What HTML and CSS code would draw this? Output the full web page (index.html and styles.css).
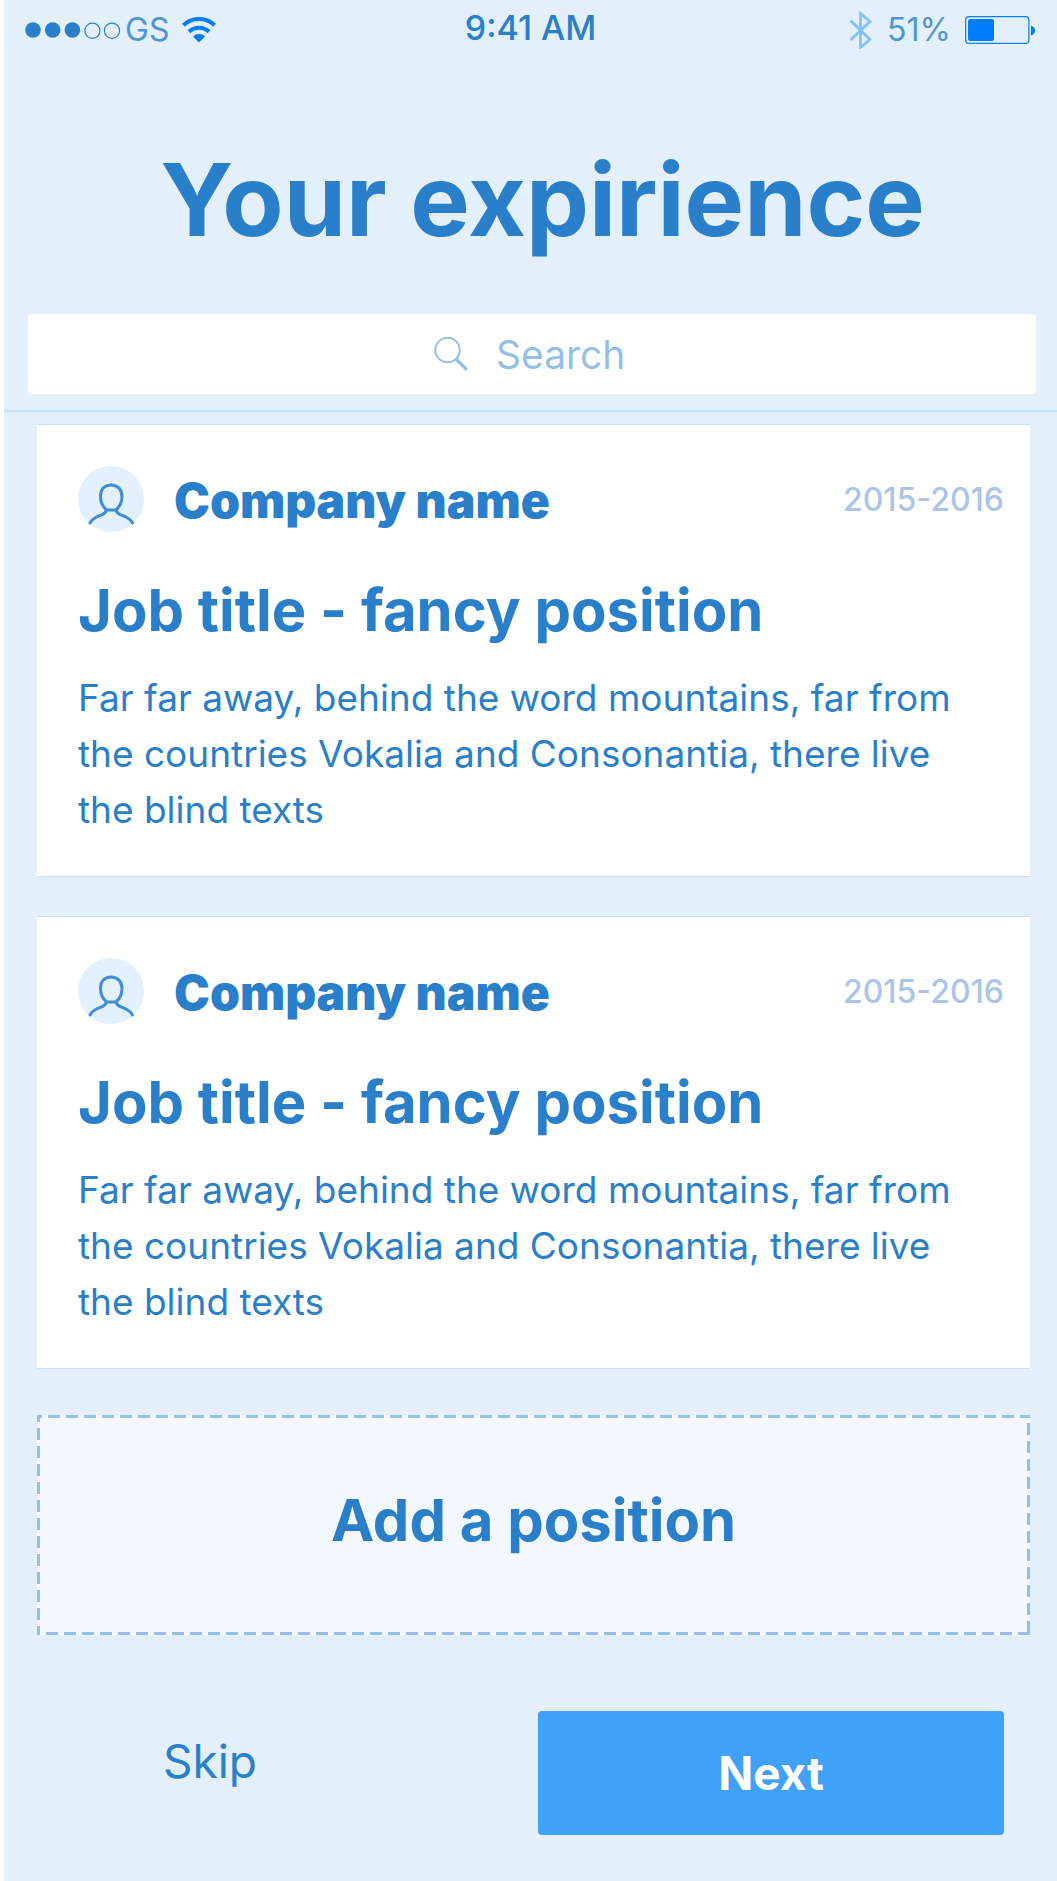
FILE: index.html
```html
<!DOCTYPE html>
<html lang="en">
<head>
<meta charset="utf-8">
<meta name="viewport" content="width=device-width, initial-scale=1">
<title>Your expirience</title>
<link rel="stylesheet" href="styles.css">
</head>
<body>
<div class="screen">
  <header class="status">
    <div class="status-left">
      <svg class="signal" width="96" height="18" viewBox="0 0 96 18" aria-hidden="true">
        <g fill="#2a7fcb"><circle cx="8" cy="9" r="7.8"/><circle cx="27.7" cy="9" r="7.8"/><circle cx="47.4" cy="9" r="7.8"/></g>
        <g fill="none" stroke="#2a7fcb" stroke-width="1.2"><circle cx="67.4" cy="9.7" r="7.6"/><circle cx="87" cy="9.7" r="7.6"/></g>
      </svg>
      <span class="carrier">GS</span>
      <svg class="wifi" width="34" height="26" viewBox="0 0 34 26" aria-hidden="true">
        <g fill="none" stroke="#007dfb" stroke-width="4"><path d="M1.4 8.3a22.3 22.3 0 0 1 31.2 0"/><path d="M7 14.7a14.4 14.4 0 0 1 20 0"/></g>
        <path d="M11 19.4a8.7 8.7 0 0 1 12 0l-6 6z" fill="#007dfb"/>
      </svg>
    </div>
    <time class="clock">9:41 AM</time>
    <div class="status-right">
      <svg width="24" height="38" viewBox="0 0 24 38" aria-hidden="true">
        <path d="M1.5 9.5l19.5 19-9.5 8V2.500l9.500 8-19.500 18.500" fill="none" stroke="#7fc0fd" stroke-width="2.700"/>
      </svg>
      <span class="percent">51%</span>
      <svg width="71" height="28" viewBox="0 0 71 28" aria-hidden="true">
        <rect x=".6" y=".6" width="63.300" height="26.800" rx="3.500" fill="none" stroke="#007dfb" stroke-width="1.200"/>
        <rect x="3" y="3" width="26" height="22" rx="2.500" fill="#007dfb"/>
        <path d="M66 9.500q4 1.500 4 5t-4 5z" fill="#007dfb"/>
      </svg>
    </div>
  </header>

  <h1 class="title">Your expirience</h1>

  <form class="search" role="search">
    <label class="search-box">
      <svg width="34" height="34" viewBox="0 0 34 34" aria-label="Search">
        <circle cx="13.500" cy="13" r="12.200" fill="none" stroke="#95c0e6" stroke-width="2"/>
        <path d="M22.500 22.500l9.500 9.500" stroke="#95c0e6" stroke-width="3.200" stroke-linecap="round"/>
      </svg>
      <input class="search-input" type="search" placeholder="Search">
    </label>
  </form>

  <main class="content">
    <article class="card">
      <div class="card-head">
        <svg class="avatar" viewBox="0 0 66 66" aria-hidden="true">
          <circle cx="33" cy="33" r="33" fill="#e3f0fd"/>
          <path d="M28.500 44c-4-3.500-6-8-6-13.500 0-7 4-11.500 10.500-11.500s11 4.500 11 11.500c0 5.500-2 10-6 13.500zM28.500 44c-1.500 5.500-6 4.500-10.500 7.300q-4 2.200-6 5.700M38 44c1.500 5.500 6 4.500 10.500 7.300q4 2.200 6 5.700" fill="none" stroke="#3f8fd6" stroke-width="3" stroke-linecap="round" stroke-linejoin="round"/>
        </svg>
        <h2 class="company">Company name</h2>
        <span class="years">2015-2016</span>
      </div>
      <h3 class="job">Job title - fancy position</h3>
      <p class="summary">Far far away, behind the word mountains, far from the countries Vokalia and Consonantia, there live the blind texts</p>
    </article>

    <article class="card">
      <div class="card-head">
        <svg class="avatar" viewBox="0 0 66 66" aria-hidden="true">
          <circle cx="33" cy="33" r="33" fill="#e3f0fd"/>
          <path d="M28.500 44c-4-3.500-6-8-6-13.500 0-7 4-11.500 10.500-11.500s11 4.500 11 11.500c0 5.500-2 10-6 13.500zM28.500 44c-1.500 5.500-6 4.500-10.500 7.300q-4 2.200-6 5.700M38 44c1.500 5.500 6 4.500 10.500 7.300q4 2.200 6 5.700" fill="none" stroke="#3f8fd6" stroke-width="3" stroke-linecap="round" stroke-linejoin="round"/>
        </svg>
        <h2 class="company">Company name</h2>
        <span class="years">2015-2016</span>
      </div>
      <h3 class="job">Job title - fancy position</h3>
      <p class="summary">Far far away, behind the word mountains, far from the countries Vokalia and Consonantia, there live the blind texts</p>
    </article>

    <button class="add" type="button">Add a position</button>
  </main>

  <footer class="actions">
    <button class="skip" type="button">Skip</button>
    <button class="next" type="button">Next</button>
  </footer>
</div>
</body>
</html>
```

FILE: styles.css
```css
:root {
  --blue: #2a7fcb;
  --dash: #96c0ea;
}

* {
  box-sizing: border-box;
}

body {
  margin: 0;
  background: #fff;
  color: var(--blue);
  font-family: Inter, "Liberation Sans", sans-serif;
}

h1, h2, h3, p {
  margin: 0;
}

button, input {
  border: 0;
  padding: 0;
  color: inherit;
  font: inherit;
}

.screen {
  min-height: 100vh;
  margin-left: 4px;
  background: #e3f0fc;
}

.status {
  display: grid;
  grid-template-columns: 1fr auto 1fr;
  align-items: center;
  height: 60px;
  padding: 0 21px;
  font-size: 32px;
  line-height: 40px;
}

.status-left, .status-right {
  display: flex;
  align-items: center;
}

.carrier {
  margin: 0 13px 0 4px;
  opacity: .8;
}

.clock {
  padding-bottom: 4px;
  font-size: 34px;
  font-weight: 500;
}

.status-right {
  justify-content: flex-end;
  gap: 14px;
}

.percent {
  opacity: .8;
}

.title {
  padding: 78px 0 52px 24px;
  font-size: 100px;
  font-weight: 700;
  line-height: 124px;
  text-align: center;
}

.search {
  padding: 0 21px 16px 24px;
  border-bottom: 2px solid #c9e4fc;
}

.search-box {
  display: flex;
  align-items: center;
  justify-content: center;
  gap: 28px;
  height: 80px;
  border-radius: 4px;
  background: #fff;
  cursor: text;
}

.search-input {
  width: 134px;
  appearance: none;
  outline: 0;
  background: none;
  font-size: 39px;
}

.search-input::-webkit-search-cancel-button {
  display: none;
}

.search-input::placeholder {
  color: #95c0e6;
  opacity: 1;
}

.content {
  display: flex;
  flex-direction: column;
  gap: 39px;
  padding: 12px 27px 0 33px;
}

.card {
  padding: 41px 26px 38px 41px;
  border: solid #c6e2fb;
  border-width: 1px 0;
  background: #fff;
}

.card-head {
  display: flex;
  align-items: center;
  gap: 30px;
}

.avatar {
  flex: none;
  width: 66px;
  height: 66px;
}

.company {
  flex: 1;
  padding-top: 4px;
  font-size: 48px;
  font-weight: 900;
  line-height: 62px;
}

.years {
  color: #a9c5e8;
  font-size: 32px;
  font-weight: 500;
}

.job {
  margin: 42px 0 24px;
  font-size: 58px;
  font-weight: 700;
  line-height: 72px;
}

.summary {
  padding-right: 40px;
  font-size: 37px;
  line-height: 56px;
}

.add {
  height: 220px;
  margin-top: 7px;
  padding-bottom: 10px;
  background:
    repeating-linear-gradient(90deg, var(--dash) 0 5px, transparent 5px 11px, var(--dash) 11px 18px) top / 100% 3px no-repeat,
    repeating-linear-gradient(90deg, var(--dash) 0 3px, transparent 3px 9px, var(--dash) 9px 18px) bottom / 100% 3px no-repeat,
    repeating-linear-gradient(180deg, var(--dash) 0 7px, transparent 7px 13px, var(--dash) 13px 18px) left / 3px 100% no-repeat,
    repeating-linear-gradient(180deg, var(--dash) 0 2px, transparent 2px 8px, var(--dash) 8px 18px) right / 3px 100% no-repeat,
    #f3f8ff;
  font-size: 58px;
  font-weight: 700;
}

.actions {
  display: grid;
  grid-template-columns: 412fr 466fr;
  gap: 122px;
  align-items: start;
  padding: 76px 53px 46px 0;
}

.skip {
  height: 100px;
  background: none;
  font-size: 46px;
}

.next {
  height: 124px;
  border-radius: 4px;
  background: #40a1f8;
  color: #fff;
  font-size: 46px;
  font-weight: 700;
}
```
